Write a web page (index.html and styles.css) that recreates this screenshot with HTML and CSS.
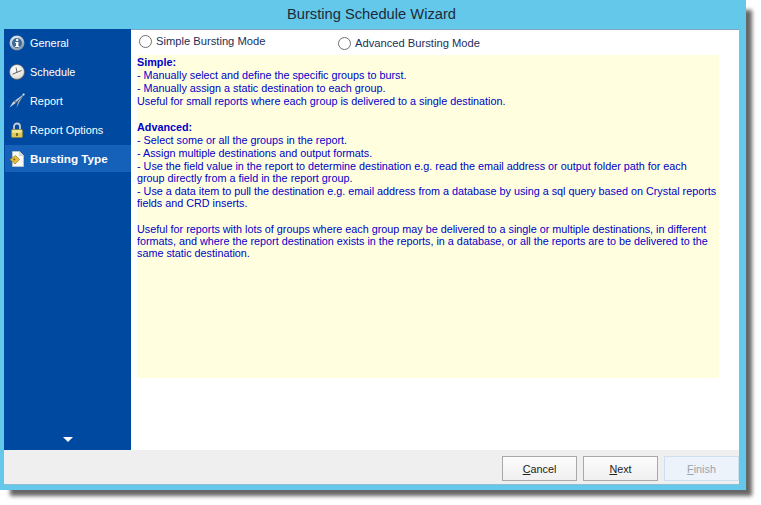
FILE: index.html
```html
<!DOCTYPE html>
<html lang="en">
<head>
<meta charset="utf-8">
<title>Bursting Schedule Wizard</title>
<link rel="stylesheet" href="styles.css">
</head>
<body>
<div class="window">
  <div class="titlebar">Bursting Schedule Wizard</div>
  <div class="client">
    <div class="main">
      <nav class="sidebar">
        <ul class="nav">
          <li class="nav-item">
            <svg class="icon" viewBox="0 0 16 16"><defs><radialGradient id="g1" cx="40%" cy="30%" r="75%"><stop offset="0" stop-color="#f2f5f8"/><stop offset="0.6" stop-color="#b8c5d2"/><stop offset="1" stop-color="#6d8096"/></radialGradient></defs><circle cx="8" cy="8" r="7.5" fill="url(#g1)"/><circle cx="8" cy="8" r="5" fill="#3d6a96"/><rect x="7" y="7" width="2.4" height="5" fill="#fff"/><rect x="6.2" y="7" width="2" height="1" fill="#fff"/><rect x="6.2" y="11" width="4" height="1" fill="#fff"/><circle cx="8.2" cy="5" r="1.2" fill="#fff"/></svg>
            <span>General</span>
          </li>
          <li class="nav-item">
            <svg class="icon" viewBox="0 0 16 16"><defs><radialGradient id="g2" cx="40%" cy="30%" r="80%"><stop offset="0" stop-color="#fff"/><stop offset="0.75" stop-color="#e4e2dc"/><stop offset="1" stop-color="#8a8884"/></radialGradient></defs><circle cx="8" cy="8" r="7.5" fill="url(#g2)" stroke="#5b5b5b" stroke-width="0.6"/><path d="M8 8.3L7 3.5M8 8.3L3.6 10.2M8 8.3L12.5 6.5" stroke="#3c3c3c" stroke-width="0.8" fill="none"/></svg>
            <span>Schedule</span>
          </li>
          <li class="nav-item">
            <svg class="icon" viewBox="0 0 16 16"><path d="M15.5 0.5L4 9L0.5 14.5L6 10.5Z" fill="#d2d6da"/><path d="M15.5 0.5L9 8.5L7.5 15L10.5 9Z" fill="#a4aab0"/><circle cx="6.5" cy="8.5" r="1.2" fill="#7b8086"/><circle cx="14.6" cy="1.4" r="1" fill="#eef0f2"/></svg>
            <span>Report</span>
          </li>
          <li class="nav-item">
            <svg class="icon" viewBox="0 0 16 16"><path d="M5 8V4.5a3 3 0 0 1 6 0V8" fill="none" stroke="#c6ccd2" stroke-width="1.8"/><rect x="2.4" y="7.5" width="11.2" height="8" rx="1.2" fill="#d9c95a" stroke="#8f8130" stroke-width="0.7"/><rect x="3.4" y="8.3" width="9.2" height="2.4" fill="#f2e9a0"/><rect x="7" y="11" width="2" height="3" fill="#77691f"/></svg>
            <span>Report Options</span>
          </li>
          <li class="nav-item active">
            <svg class="icon" viewBox="0 0 16 16"><path d="M3.5 0.5H10.5L14.5 4.5V15.5H3.5Z" fill="#fbfbf6" stroke="#c9c9c0" stroke-width="0.7"/><path d="M10.5 0.5V4.5H14.5" fill="#dcdcd2" stroke="#b5b5ac" stroke-width="0.5"/><path d="M1 8.5L6.5 4.5L10.5 8.5L6 13Z" fill="#e6bd3c" stroke="#9a7b1c" stroke-width="0.7"/><circle cx="5.3" cy="8.6" r="1" fill="#7b6116"/></svg>
            <span>Bursting Type</span>
          </li>
        </ul>
        <div class="more"><div class="arrow"></div></div>
      </nav>
      <section class="content">
        <div class="modes">
          <label class="mode"><span class="radio"></span><span>Simple Bursting Mode</span></label>
          <label class="mode mode-adv"><span class="radio"></span><span>Advanced Bursting Mode</span></label>
        </div>
        <div class="help">
          <div class="line"><b>Simple:</b></div>
          <div class="line">- Manually select and define the specific groups to burst.</div>
          <div class="line">- Manually assign a static destination to each group.</div>
          <div class="line">Useful for small reports where each group is delivered to a single destination.</div>
          <div class="gap"></div>
          <div class="line"><b>Advanced:</b></div>
          <div class="line">- Select some or all the groups in the report.</div>
          <div class="line">- Assign multiple destinations and output formats.</div>
          <div class="line">- Use the field value in the report to determine destination e.g. read the email address or output folder path for each<br>group directly from a field in the report group.</div>
          <div class="line">- Use a data item to pull the destination e.g. email address from a database by using a sql query based on Crystal reports<br>fields and CRD inserts.</div>
          <div class="gap"></div>
          <div class="line">Useful for reports with lots of groups where each group may be delivered to a single or multiple destinations, in different<br>formats, and where the report destination exists in the reports, in a database, or all the reports are to be delivered to the<br>same static destination.</div>
        </div>
      </section>
    </div>
    <footer class="footer">
      <button class="btn" type="button"><u>C</u>ancel</button>
      <button class="btn" type="button"><u>N</u>ext</button>
      <button class="btn btn-disabled" type="button" disabled><u>F</u>inish</button>
    </footer>
  </div>
</div>
</body>
</html>
```
FILE: styles.css
```css
* { box-sizing: border-box; }
html, body { margin: 0; padding: 0; background: #fff; }
body { width: 761px; height: 505px; overflow: hidden; font-family: "Liberation Sans", Arial, sans-serif; font-size: 10.8px; }
.window {
  width: 746px; height: 490px;
  background: #64c8ea;
  padding: 0 7px 5px 4px;
  display: flex; flex-direction: column;
  box-shadow: 8px 8px 4px -2px #666;
}
.titlebar {
  height: 29px; line-height: 29px;
  text-align: center; font-size: 14.7px; color: #1c2b3a;
}
.client { flex: 1; display: flex; flex-direction: column; background: #fff; border-top: 1px solid #7fa8c4; border-bottom: 1px solid #8fbdd2; min-height: 0; }
.main { flex: 1; display: flex; min-height: 0; }
.sidebar { width: 127px; background: #0049a0; display: flex; flex-direction: column; margin-top: -1px; }
.nav { list-style: none; margin: 0; padding: 0; display: flex; flex-direction: column; gap: 2px; }
.nav-item { height: 27px; display: flex; align-items: center; gap: 5px; padding-left: 5px; color: #fff; font-size: 10.9px; }
.nav-item.active { background: #1560b8; font-weight: bold; font-size: 11.7px; margin-left: 1px; padding-left: 4px; }
.icon { width: 16px; height: 16px; flex: none; }
.more { margin-top: auto; height: 25px; display: flex; justify-content: center; padding-top: 12px; }
.arrow { width: 0; height: 0; border-left: 5px solid transparent; border-right: 5px solid transparent; border-top: 5px solid #fff; }
.content { flex: 1; padding: 5px 20px 0 6px; min-width: 0; }
.modes { display: flex; height: 20px; color: #22305a; font-size: 11.2px; }
.mode { display: flex; align-items: flex-start; gap: 4px; width: 199px; padding-left: 2px; line-height: 13px; }
.mode-adv { padding-top: 2px; }
.radio { width: 13px; height: 13px; border: 1px solid #6e6e6e; border-radius: 50%; background: #fff; flex: none; }
.help { height: 323px; background: #ffffe0; border-radius: 2px; color: #0000c8; padding-top: 1px; }
.line { line-height: 12px; margin-bottom: 1px; }
.gap { height: 13px; }
.help b { font-weight: bold; }
.footer { height: 34px; flex: none; background: #efefef; display: flex; justify-content: flex-end; gap: 6px; padding-top: 6px; }
.btn {
  width: 75px; height: 25px; padding: 0; background: linear-gradient(#fcfcfc, #f0f0f0);
  border: 1px solid #a8a8a8; font: 10.8px "Liberation Sans", Arial, sans-serif; color: #222;
}
.btn-disabled { background: #ecf3fb; border-color: #cfdff0; color: #9aa4ad; }
```
